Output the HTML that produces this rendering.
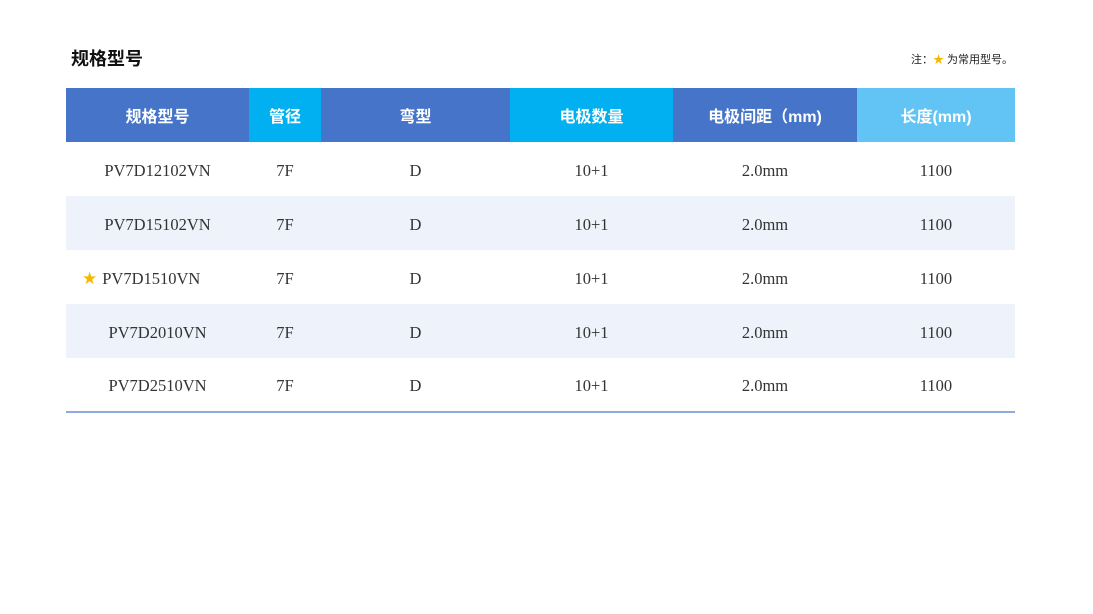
<!DOCTYPE html>
<html><head><meta charset="utf-8"><style>
body{margin:0;width:1093px;height:614px;background:#fff;position:relative;overflow:hidden;font-family:"Liberation Sans","Noto Sans CJK SC",sans-serif}
.t{position:absolute;left:71px;top:45px;font-size:18px;font-weight:bold;color:#111}
.n{position:absolute;left:911px;top:51px;font-size:11px;color:#222}
.n b{color:#f5b800;font-weight:normal}
table{position:absolute;left:66px;top:88px;border-collapse:collapse;width:949px;table-layout:fixed}
th{height:54px;color:#fff;font-size:16px;font-weight:bold;padding:0;text-align:center}
td{height:54px;padding:3px 0 0 0;box-sizing:border-box;text-align:center;font-family:"Liberation Serif","Noto Serif CJK SC",serif;font-size:16.5px;color:#333}
tr.a td{background:#edf2fb}
tbody tr:last-child td{border-bottom:2px solid #8eaadf}
.s{color:#f5b800;font-family:"DejaVu Sans",sans-serif;font-size:17px;margin-right:5px}
</style></head><body>
<div class="t">规格型号</div>
<div class="n">注：<b>★</b> 为常用型号。</div>
<table>
<colgroup><col style="width:183px"><col style="width:72px"><col style="width:189px"><col style="width:163px"><col style="width:184px"><col style="width:158px"></colgroup>
<thead><tr>
<th style="background:#4674c8">规格型号</th><th style="background:#00b0f0">管径</th><th style="background:#4674c8">弯型</th><th style="background:#00b0f0">电极数量</th><th style="background:#4674c8">电极间距（mm)</th><th style="background:#61c4f4">长度(mm)</th>
</tr></thead>
<tbody>
<tr><td>PV7D12102VN</td><td>7F</td><td>D</td><td>10+1</td><td>2.0mm</td><td>1100</td></tr>
<tr class="a"><td>PV7D15102VN</td><td>7F</td><td>D</td><td>10+1</td><td>2.0mm</td><td>1100</td></tr>
<tr><td style="text-align:left;padding-left:16px"><span class="s">★</span>PV7D1510VN</td><td>7F</td><td>D</td><td>10+1</td><td>2.0mm</td><td>1100</td></tr>
<tr class="a"><td style="padding-left:0">PV7D2010VN</td><td>7F</td><td>D</td><td>10+1</td><td>2.0mm</td><td>1100</td></tr>
<tr><td style="padding-left:0">PV7D2510VN</td><td>7F</td><td>D</td><td>10+1</td><td>2.0mm</td><td>1100</td></tr>
</tbody></table>
</body></html>
